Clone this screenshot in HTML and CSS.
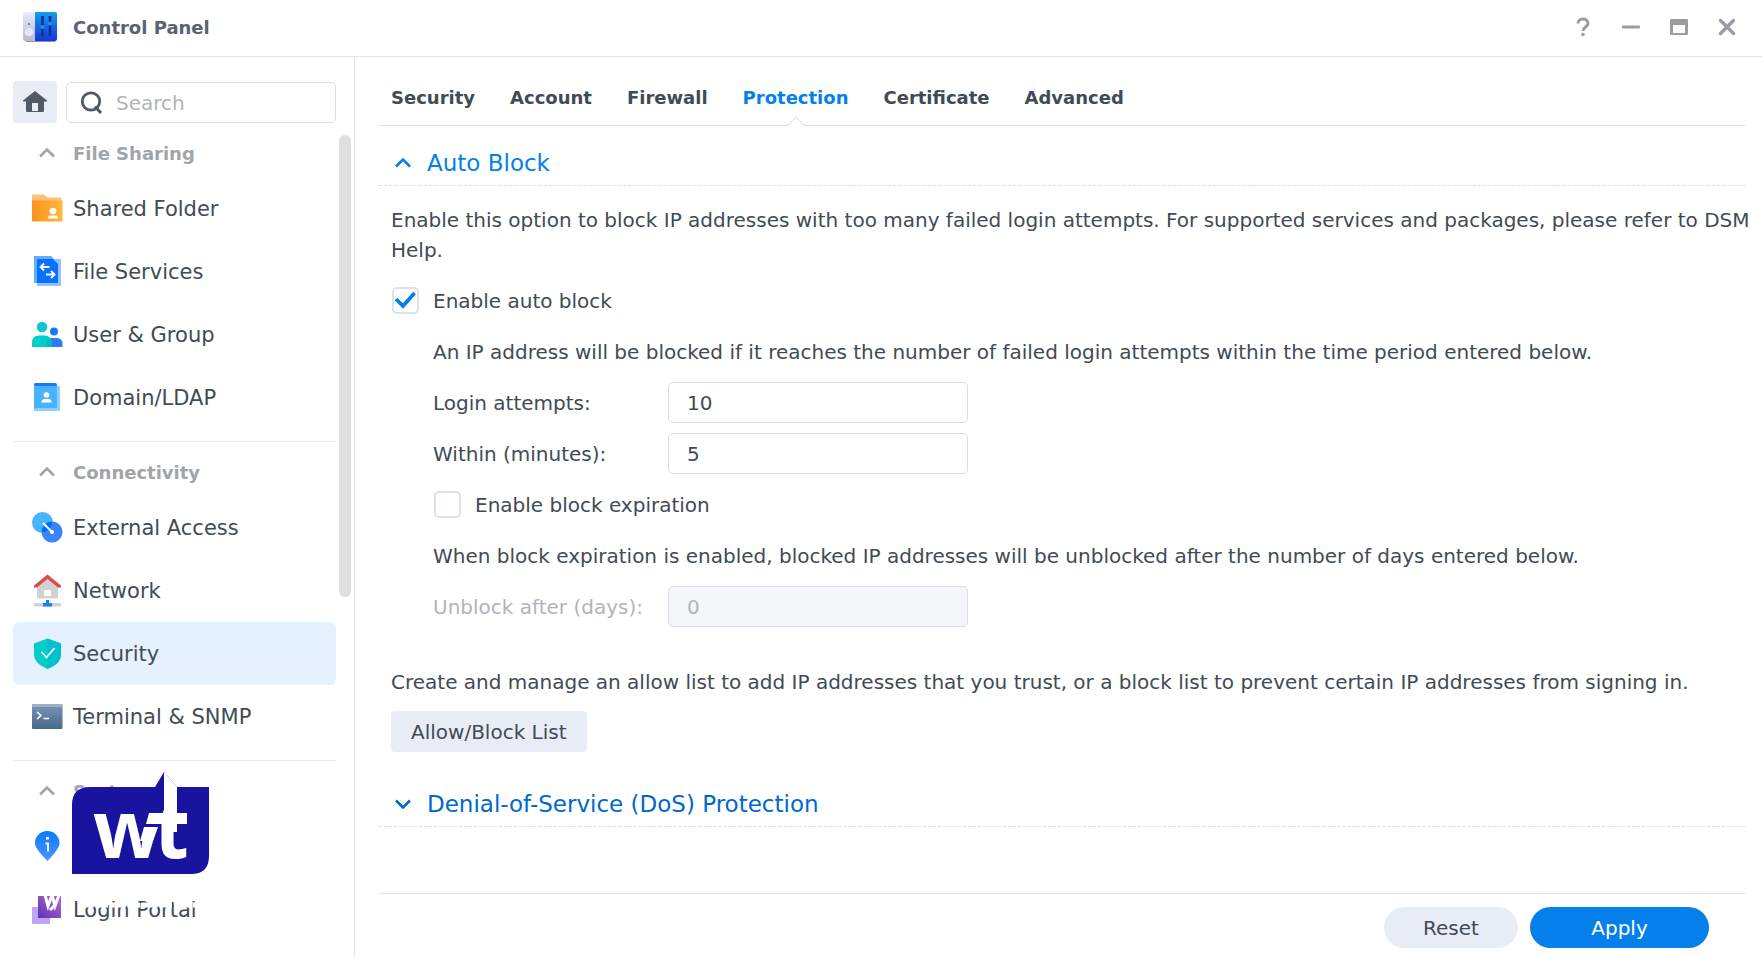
FILE: index.html
```html
<!DOCTYPE html>
<html lang="en">
<head>
  <meta charset="UTF-8" />
  <title>Control Panel</title>
  <link rel="stylesheet" href="styles.css">
</head>
<body>

  <header class="titlebar">
    <svg class="app-icon" width="34" height="32" viewBox="0 0 34 32" aria-hidden="true">
      <defs>
        <linearGradient id="appBlue" x1="0" y1="0" x2="0" y2="1"><stop offset="0" stop-color="#129fe9"/><stop offset="1" stop-color="#1734dc"/></linearGradient>
        <linearGradient id="appGrey" x1="0" y1="0" x2="0" y2="1"><stop offset="0" stop-color="#e6ebfd"/><stop offset="1" stop-color="#b9bbd0"/></linearGradient>
      </defs>
      <rect x="2" y="3" width="31" height="28" rx="2" fill="#8f90a0"/>
      <path d="M2 1h10v29H2a2 2 0 0 1-2-2V3a2 2 0 0 1 2-2z" fill="url(#appGrey)"/>
      <path d="M12 1h20a2 2 0 0 1 2 2v25a2 2 0 0 1-2 2H12z" fill="url(#appBlue)"/>
      <circle cx="6" cy="13" r="1" fill="#666a80"/>
      <circle cx="6" cy="21" r="4" fill="#e6e8f8"/>
      <path d="M19.500 5v20M27 5v20" stroke="#0b3290" stroke-width="2.600"/>
      <circle cx="19.500" cy="16" r="2" fill="#2f8ff0"/>
      <circle cx="27" cy="12.500" r="2" fill="#2f8ff0"/>
    </svg>
    <h1>Control Panel</h1>
    <div class="window-buttons">
      <button type="button" aria-label="Help"><svg width="24" height="24" viewBox="0 0 24 24"><path d="M7 8.500C7 2.500 17 2.500 17 8.500C17 12 12 12 12 16" fill="none" stroke="currentColor" stroke-width="3"/><circle cx="12" cy="19.500" r="1.800" fill="currentColor"/></svg></button>
      <button type="button" aria-label="Minimize"><svg width="24" height="24" viewBox="0 0 24 24"><rect x="3" y="10.500" width="18" height="3" rx="1" fill="currentColor"/></svg></button>
      <button type="button" aria-label="Maximize"><svg width="24" height="24" viewBox="0 0 24 24"><path fill-rule="evenodd" d="M4 4h16a1 1 0 0 1 1 1v14a1 1 0 0 1-1 1H4a1 1 0 0 1-1-1V5a1 1 0 0 1 1-1zM6 10v8h12v-8z" fill="currentColor"/></svg></button>
      <button type="button" aria-label="Close"><svg width="24" height="24" viewBox="0 0 24 24"><path d="M5.500 5.500l13 13M18.500 5.500l-13 13" stroke="currentColor" stroke-width="3.400" stroke-linecap="round"/></svg></button>
    </div>
  </header>

  <div class="window">
    <aside class="sidebar">
      <div class="search-row">
        <button type="button" class="home" aria-label="Home">
          <svg width="24" height="22" viewBox="0 0 24 22"><path fill-rule="evenodd" d="M12 0L24 9.500V10.500H21V20a1 1 0 0 1-1 1H4a1 1 0 0 1-1-1V10.500H0V9.500zM9 12v8h6v-8z" fill="#505a64"/></svg>
        </button>
        <label class="search">
          <svg width="22" height="24" viewBox="0 0 22 24" aria-hidden="true"><circle cx="10" cy="10.500" r="8.700" fill="none" stroke="#505a64" stroke-width="2.800"/><path d="M14 15.500l6 6.500" stroke="#505a64" stroke-width="3"/></svg>
          <input type="search" placeholder="Search" aria-label="Search">
        </label>
      </div>

      <nav class="groups">
        <section class="group">
          <h2><svg class="chevron" viewBox="0 0 18 12"><path d="M2 9.500l7-7 7 7"/></svg>File Sharing</h2>
          <a href="#">
            <svg viewBox="0 0 32 32"><defs><linearGradient id="folder"><stop offset="0" stop-color="#fa921e"/><stop offset="1" stop-color="#ffb83c"/></linearGradient></defs><path d="M1 20V2.500a1 1 0 0 1 1-1H13l3 3h14.500v10z" fill="#fcbf7c"/><path d="M1 7.500h30.500V27a1 1 0 0 1-1 1.500H2a1 1 0 0 1-1-1z" fill="url(#folder)"/><circle cx="22" cy="18" r="3.300" fill="#fff"/><path d="M17 25.500a2 3 0 0 1 2-3h6a2 3 0 0 1 2 3z" fill="#fff"/></svg>
            Shared Folder
          </a>
          <a href="#">
            <svg viewBox="0 0 32 32"><path d="M6 3h24v27H6z" fill="#94c1ff"/><path d="M6 3h16l5 5v19H6z" fill="#0872ff"/><path d="M3 0h17l3 3H6v24H3z" fill="#63adff"/><path d="M18.500 11H10M13 7.500L9.500 11l3.500 3.500M15 18.500h8.500M20 15l3.500 3.500L20 22" fill="none" stroke="#fff" stroke-width="1.800"/></svg>
            File Services
          </a>
          <a href="#">
            <svg viewBox="0 0 32 32"><circle cx="11" cy="8" r="5.300" fill="#15c4d0"/><circle cx="23" cy="12.500" r="4" fill="#1479ff"/><path d="M15 28v-4q0-5 6-5h4q6 0 6.500 5v4z" fill="#3179fb"/><path d="M1 28v-4q0-7.500 7-7.500h6q6 0 7 7.500v4z" fill="#03cfca"/><path d="M15 28v-4q0-3 3-5 3 2 3 5v4z" fill="#00bbbc"/></svg>
            User &amp; Group
          </a>
          <a href="#">
            <svg viewBox="0 0 32 32"><path d="M4 1h20a2 2 0 0 1 2 2v4H3V2z" fill="#1877fb"/><path d="M4 4h25v24a1 1 0 0 1-1 1H4a1 1 0 0 1-1-1z" fill="#8cd0ff"/><path d="M3 3q1 1 3 1h20v22H6q-2 0-3 1z" fill="#49b3ff"/><circle cx="15.500" cy="13" r="2.800" fill="#fff"/><path d="M10.500 20.500q0-3.500 3-3.500h4q3 0 3 3.500z" fill="#fff"/></svg>
            Domain/LDAP
          </a>
        </section>

        <section class="group">
          <h2><svg class="chevron" viewBox="0 0 18 12"><path d="M2 9.500l7-7 7 7"/></svg>Connectivity</h2>
          <a href="#">
            <svg viewBox="0 0 32 32"><circle cx="11.500" cy="10.500" r="10.500" fill="#45b5ff"/><circle cx="21" cy="20" r="10.500" fill="#3984ff"/><path d="M21 9.500a10.500 10.500 0 0 0-10 11 10.500 10.500 0 0 0 10-11z" fill="#006cfb"/><path d="M12 11l9 9" stroke="#fff" stroke-width="2"/><circle cx="21" cy="20" r="2" fill="#fff"/></svg>
            External Access
          </a>
          <a href="#">
            <svg viewBox="0 0 32 32"><path d="M16.500 3l10.500 9v10a1.500 1.500 0 0 1-1.500 1.500h-18A1.500 1.500 0 0 1 6 22V12z" fill="#cfd1d5"/><path d="M3 12.500V10.500L16.500-0.500 30 10.500v2h-3L16.500 4 6 12.500z" fill="#dc4b4b"/><rect x="13" y="15" width="7" height="6" rx="1" fill="#fff"/><path d="M3 28h27v3.500H3z" fill="#cdd2d8"/><path d="M12 31.500V28h3v-3h3v3h3v3.500z" fill="#1680ff"/></svg>
            Network
          </a>
          <a href="#" class="selected">
            <svg viewBox="0 0 32 32"><path d="M16.500 0.500l13.500 5v11q0 9-13.500 14.500Q3 25.500 3 16.500v-11z" fill="#03cdca"/><path d="M16.500 0.500l13.500 5v11q0 9-13.500 14.500z" fill="#00c1cb"/><path d="M10.500 14l5 5.500 8-9.500" fill="none" stroke="#fff" stroke-width="1.800"/></svg>
            Security
          </a>
          <a href="#">
            <svg viewBox="0 0 32 32"><defs><linearGradient id="term" x1="0" y1="0" x2="0" y2="1"><stop offset="0" stop-color="#7996b4"/><stop offset="1" stop-color="#48688b"/></linearGradient></defs><rect x="1" y="3" width="30.500" height="25" rx="1" fill="url(#term)"/><path d="M1 6V4a1 1 0 0 1 1-1h28.500a1 1 0 0 1 1 1v2z" fill="#9bb3c6"/><path d="M6 11l4 3.500L6 18M12.500 17.500H18" fill="none" stroke="#fff" stroke-width="1.500"/></svg>
            Terminal &amp; SNMP
          </a>
        </section>

        <section class="group">
          <h2><svg class="chevron" viewBox="0 0 18 12"><path d="M2 9.500l7-7 7 7"/></svg>System</h2>
          <a href="#">
            <svg viewBox="0 0 32 32"><defs><linearGradient id="pin" x1="0" y1="0" x2="0" y2="1"><stop offset="0" stop-color="#087bff"/><stop offset="1" stop-color="#4a94ff"/></linearGradient></defs><path d="M16.500 0A12 12 0 0 1 28.500 12.500Q28.500 17.500 16.500 30 4 17.500 4 12.500A12 12 0 0 1 16.500 0z" fill="url(#pin)"/><path d="M15 6h3v2.500h-3z" fill="#fff"/><path d="M14.500 12.500H17v8" fill="none" stroke="#fff" stroke-width="2"/></svg>
            Info Center
          </a>
          <a href="#">
            <svg viewBox="0 0 32 32"><defs><linearGradient id="portal" x1="1" y1="0" x2="0" y2="1"><stop offset="0" stop-color="#b567d5"/><stop offset="1" stop-color="#5a36b2"/></linearGradient></defs><path d="M1 13h18v17H2a1 1 0 0 1-1-1z" fill="#bfa4f4"/><path d="M7 2h23v22H7z" fill="url(#portal)"/></svg>
            Login Portal
          </a>
        </section>
      </nav>
      <div class="scrollbar"></div>

      <!-- watermark badge over the bottom of the menu -->
      <svg class="badge" width="177" height="142" viewBox="0 0 177 142" aria-hidden="true">
        <path d="M58 15H123L132 0 145 15h32V84q0 18-18 18H40V33Q40 15 58 15z" fill="#1914a0"/>
        <text x="61" y="86" class="badge-letter">w</text>
        <path d="M112 40h20v17h-20z" fill="#1914a0"/>
        <path d="M132 0L145 15V60H132zM117 41H155V52H114zM112 55h14l-5 14h-13z" fill="#fff"/>
        <text x="122" y="86" class="badge-letter">t</text>
        <!-- white strapline, only visible where it crosses the menu item -->
        <path d="M13 123l3 11 4-11 3 11 4-11M18 138l4-4" fill="none" stroke="#fff" stroke-width="3"/>
        <path d="M46 133H164" stroke="#fff" stroke-width="5" stroke-dasharray="16 3 11 2"/>
      </svg>
    </aside>

    <main class="content">
      <nav class="tabs">
        <a href="#">Security</a>
        <a href="#">Account</a>
        <a href="#">Firewall</a>
        <a href="#" class="active">Protection<svg width="18" height="10" viewBox="0 0 18 10"><path d="M0 10L9 1l9 9" fill="#fff" stroke="#d5dfe8"/></svg></a>
        <a href="#">Certificate</a>
        <a href="#">Advanced</a>
      </nav>

      <form class="settings" id="protection">
        <h2 class="fold"><svg class="chevron" viewBox="0 0 18 12"><path d="M2 9.500l7-7 7 7"/></svg>Auto Block</h2>
        <div class="fold-body">
          <p class="intro">Enable this option to block IP addresses with too many failed login attempts. For supported services and packages, please refer to DSM Help.</p>
          <label class="check"><input type="checkbox" checked>Enable auto block</label>
          <div class="indent">
            <p>An IP address will be blocked if it reaches the number of failed login attempts within the time period entered below.</p>
            <div class="field"><label for="attempts">Login attempts:</label><input type="text" id="attempts" value="10"></div>
            <div class="field"><label for="within">Within (minutes):</label><input type="text" id="within" value="5"></div>
            <label class="check"><input type="checkbox">Enable block expiration</label>
            <p>When block expiration is enabled, blocked IP addresses will be unblocked after the number of days entered below.</p>
            <div class="field disabled"><label for="unblock">Unblock after (days):</label><input type="text" id="unblock" value="0" disabled></div>
          </div>
          <p class="list-note">Create and manage an allow list to add IP addresses that you trust, or a block list to prevent certain IP addresses from signing in.</p>
          <button type="button" class="list-button">Allow/Block List</button>
        </div>
        <h2 class="fold closed"><svg class="chevron" viewBox="0 0 18 12"><path d="M2 2.500l7 7 7-7"/></svg>Denial-of-Service (DoS) Protection</h2>
      </form>

      <footer class="actions">
        <button type="reset" form="protection" class="reset">Reset</button>
        <button type="submit" form="protection" class="apply">Apply</button>
      </footer>
    </main>
  </div>

</body>
</html>
```
FILE: styles.css
```css
* {
  box-sizing: border-box;
}

body {
  margin: 0;
  height: 100vh;
  display: flex;
  flex-direction: column;
  overflow: hidden;
  background: #fff;
  color: #414b55;
  font-family: Verdana, "DejaVu Sans", sans-serif;
  font-size: 20px;
}

h1, h2, p {
  margin: 0;
}

a {
  color: inherit;
  text-decoration: none;
}

button, input {
  font: inherit;
  color: inherit;
}

button {
  border: none;
  padding: 0;
  cursor: pointer;
}

.chevron {
  width: 18px;
  height: 12px;
  fill: none;
  stroke: currentColor;
  stroke-width: 2.6;
}

/* title bar */
.titlebar {
  display: flex;
  align-items: center;
  height: 57px;
  padding: 0 23px 2px;
  border-bottom: 1px solid #dfe7ee;
}

.titlebar h1 {
  margin-left: 16px;
  font-size: 18px;
  color: #5a6470;
}

.window-buttons {
  display: flex;
  gap: 24px;
  margin-left: auto;
  color: #979ca5;
}

.window-buttons button {
  height: 24px;
  background: none;
}

.window {
  flex: 1;
  display: flex;
  min-height: 0;
}

/* sidebar */
.sidebar {
  position: relative;
  width: 355px;
  flex: none;
  padding: 24px 18px 0 13px;
  border-right: 1px solid #dfe7ee;
}

.search-row {
  display: flex;
  align-items: flex-end;
  gap: 9px;
}

.home {
  flex: none;
  width: 44px;
  height: 42px;
  display: flex;
  align-items: center;
  justify-content: center;
  border-radius: 4px;
  background: #e8edf5;
}

.search {
  flex: 1;
  min-width: 0;
  display: flex;
  align-items: center;
  gap: 13px;
  height: 41px;
  padding: 0 14px;
  border: 1px solid #d5dfe8;
  border-radius: 5px;
}

.search input {
  flex: 1;
  min-width: 0;
  padding: 0;
  border: none;
  outline: none;
  background: none;
}

.search input::placeholder {
  color: #b0b5ba;
}

.group {
  padding-bottom: 12px;
}

.group + .group {
  border-top: 1px solid #e6ebf2;
}

.group h2 {
  display: flex;
  align-items: center;
  gap: 17px;
  height: 54px;
  padding: 6px 0 0 25px;
  font-size: 18px;
  color: #a0a5aa;
}

.group a {
  display: flex;
  align-items: center;
  gap: 10px;
  height: 63px;
  padding: 1px 0 0 18px;
  border-radius: 6px;
  font-size: 21px;
}

.group a svg {
  width: 32px;
  height: 32px;
  overflow: visible;
}

.group a.selected {
  background: #e5f1fe;
}

.scrollbar {
  position: absolute;
  top: 78px;
  right: 3px;
  width: 12px;
  height: 462px;
  border-radius: 6px;
  background: #dfdfdf;
}

.badge {
  position: absolute;
  left: 32px;
  top: 715px;
}

.badge-letter {
  font-family: "Open Sans", "Noto Sans", sans-serif;
  font-size: 80px;
  font-weight: bold;
  fill: #fff;
}

/* content */
.content {
  flex: 1;
  min-width: 0;
  display: flex;
  flex-direction: column;
  padding: 0 17px 0 24px;
}

.tabs {
  display: flex;
  gap: 35px;
  height: 69px;
  padding: 0 12px;
  border-bottom: 1px solid #d5dfe8;
  font-size: 18px;
  font-weight: bold;
  line-height: 82px;
}

.tabs .active {
  position: relative;
  color: #057feb;
}

.tabs .active svg {
  position: absolute;
  left: calc(50% - 9px);
  top: 59px;
}

.settings {
  flex: 1;
  min-height: 0;
}

.fold {
  display: flex;
  align-items: center;
  gap: 15px;
  height: 60px;
  padding: 14px 0 0 15px;
  border-bottom: 1px dashed #d5dfe8;
  font-size: 23px;
  font-weight: normal;
  color: #057feb;
}

.fold.closed {
  color: #0068cc;
}

.fold-body {
  padding: 19px 12px 15px;
  line-height: 30px;
}

/* the intro may run into the right gutter */
.intro {
  margin-right: -20px;
  padding-bottom: 5px;
}

.check {
  display: flex;
  align-items: center;
  gap: 14px;
  height: 41px;
  margin: 10px 0;
}

.check input {
  appearance: none;
  width: 27px;
  height: 27px;
  margin: 0 0 0 1px;
  border: 2px solid #dae3ec;
  border-radius: 5px;
}

.check input:checked {
  background: url("data:image/svg+xml,%3Csvg xmlns='http://www.w3.org/2000/svg' viewBox='0 0 23 23'%3E%3Cpath d='M2 10l7 7L20.500 4' fill='none' stroke='%23057feb' stroke-width='3.800'/%3E%3C/svg%3E") center / 23px no-repeat;
}

.indent {
  padding-left: 42px;
}

.indent p {
  padding: 6px 0 5px;
}

.field {
  display: flex;
  align-items: center;
  height: 41px;
  margin: 10px 0;
}

.field label {
  width: 235px;
}

.field input {
  width: 300px;
  height: 41px;
  padding: 0 18px;
  border: 1px solid #d5dfe8;
  border-radius: 5px;
}

.disabled, .field input:disabled {
  color: #b0b5ba;
}

.field input:disabled {
  background: #f4f6fa;
}

.list-note {
  padding: 30px 0 14px;
}

.list-button {
  height: 41px;
  padding: 0 20px;
  border-radius: 4px;
  background: #e8edf5;
}

.actions {
  display: flex;
  justify-content: flex-end;
  gap: 12px;
  height: 64px;
  padding: 13px 36px 0 0;
  border-top: 1px solid #e2e6ea;
}

.actions button {
  height: 41px;
  border-radius: 21px;
}

.reset {
  width: 134px;
  background: #e8edf5;
}

.apply {
  width: 179px;
  background: #057feb;
}

.actions .apply {
  color: #fff;
}
```
